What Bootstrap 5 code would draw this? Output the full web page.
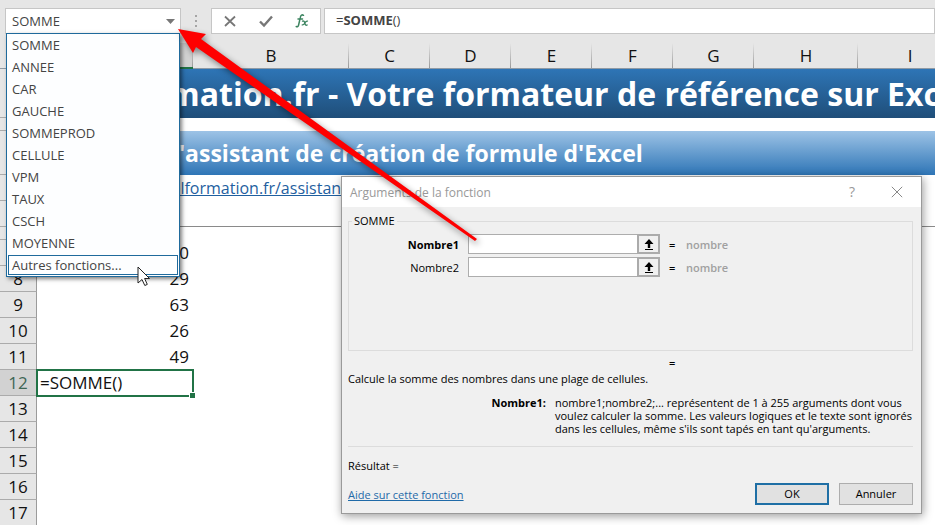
<!DOCTYPE html>
<html lang="fr">
<head>
<meta charset="utf-8">
<meta name="viewport" content="width=device-width, initial-scale=1">
<title>Arguments de la fonction</title>
<link rel="stylesheet" href="https://cdn.jsdelivr.net/npm/bootstrap@5.3.0/dist/css/bootstrap.min.css">
<style>
  :root { --chrome: #e6e6e6; --rule: #c6c6c6; --green: #217346; --menu: #1f6a9c; }
  body { font-family: "Open Sans", "Noto Sans", sans-serif; background: #fff; min-height: 100vh; }
  .sheet-app { min-height: 100vh; }

  /* formula bar */
  .formula-bar { background: var(--chrome); padding: 8px 0 9px 5px; }
  .box { background: #fff; border: 1px solid var(--rule); height: 26px; }
  .name-box { width: 176px; }
  .name-box input, .formula-line { font-size: 13px; line-height: 22px; color: #444; }
  .name-box input { padding: 0 0 0 6px; outline: 0; }
  .bare { border: 0; background: transparent; padding: 0; line-height: 1; color: inherit; }
  .name-box .opener { padding-right: 5px; }
  .grip { width: 30px; }
  .tools { width: 110px; padding: 0 10px; margin-right: 3px; }
  .formula-line { padding-left: 11px; }

  .fn-menu { top: 24px; left: 0; width: 174px; padding: 0 1px 1px; z-index: 5; background: #fdfeff;
    border: 1px solid var(--menu); box-shadow: 2px 2px 4px rgba(0,0,0,.5); }
  .fn-menu button { font-size: 13px; line-height: 20px; height: 22px; padding: 0 3px; color: #444; border: 1px solid transparent; }
  .fn-menu .hot { border-color: var(--menu); height: 20px; line-height: 18px; margin-top: 1px; }

  /* worksheet grid */
  .grid { table-layout: fixed; width: 100%; min-width: 962px; border-collapse: separate; border-spacing: 0; color: #111; font-size: 17px; }
  .grid th, .grid td { padding: 0; height: 26px; line-height: 24px; font-weight: 400; white-space: nowrap; overflow: hidden; }
  .grid thead th { text-align: center; border-bottom: 1px solid #8f9aa5; background: linear-gradient(#e6e6e6, #999) right/1px 100% no-repeat var(--chrome); }
  .grid thead th.on { background-color: #d2d2d2; border-bottom: 2px solid var(--green); color: var(--green); }
  .grid tbody th { text-align: center; background: var(--chrome); border-right: 1px solid #9b9b9b; border-bottom: 1px solid #ababab; }
  .grid tbody th.on { background: #d2d2d2; color: #3f6655; }
  .grid .thin th, .grid .thin td { height: 13px; line-height: 12px; font-size: 10px; }
  .grid .banner td { height: 49px; line-height: 48px; font-size: 32px; font-weight: 700; color: #fff; padding-left: 3px; background: linear-gradient(#2e75b6, #1f4e79); }
  .grid .banner-sub td { height: 44px; line-height: 44px; font-size: 23px; font-weight: 700; color: #fff; padding-left: 129px; background: linear-gradient(#9dc3e6, #2e75b6); }
  .grid .web td { padding-left: 68px; font-size: 16px; }
  .web a { color: #1f5f9f; text-decoration: underline; }
  .grid .ruled td { border-bottom: 1px solid #8a8a8a; }
  .grid td.num { text-align: right; padding-right: 4px; }
  .grid td.active-cell { padding-left: 3px; outline: 2px solid var(--green); outline-offset: -1px; overflow: visible; position: relative; }
  .handle { right: -2px; bottom: -2px; width: 5px; height: 5px; background: var(--green); outline: 1px solid #fff; }
  .col-head { width: 37px; } .col-a { width: 156px; } .col-b { width: 156px; } .col-s { width: 81px; } .col-h { width: 104px; }

  /* dialog */
  .fn-dialog { top: 176px; right: 13px; width: 581px; z-index: 3; font-size: 11px; line-height: 13px; color: #000;
    background: #f0f0f0; border: 1px solid #9a9a9a; box-shadow: 1px 2px 9px rgba(0,0,0,.4); }
  .title-strip { background: #fff; height: 30px; padding: 0 18px 0 8px; color: #999; font-size: 12px; }
  .title-strip .query { margin-right: 36px; font-size: 14px; }
  .dlg-body { padding: 7px 8px 8px 6px; }
  .arg-frame { height: 137px; border: 1px solid #dcdcdc; padding: 0; }
  .arg-frame legend { float: none; width: auto; font-size: 11px; line-height: 14px; padding: 0 2px; margin: 0 0 6px 3px; }
  .arg-row { margin-bottom: 3px; height: 20px; }
  .arg-row label { width: 110px; text-align: right; margin-right: 9px; }
  .arg-row input { width: 170px; height: 20px; border: 1px solid #adadad; background: #fff; padding: 0 3px; outline: 0; }
  .arg-row button { width: 23px; height: 20px; border: 2px solid #ababab; background: #f0f0f0; margin-left: -1px; }
  .arg-eq { width: 26px; padding-left: 9px; font-weight: 600; }
  .hint { color: #a0a0a0; font-weight: 600; }
  .total-eq { padding: 5px 0 3px 321px; font-weight: 600; }
  .arg-help { padding: 11px 0; }
  .arg-help dt { width: 198px; text-align: right; margin-right: 9px; }
  .split { border-top: 1px solid #dcdcdc; padding-top: 12px; }
  .actions { padding-top: 11px; gap: 10px; }
  .fn-dialog a { color: #1f6aa8; }
  .push { width: 74px; height: 22px; padding: 0; border: 1px solid #adadad; background: #e1e1e1; font-size: 11px; line-height: 18px; }
  .push.main { border: 2px solid #1f6fa5; }

  .pointer-arrow { left: 0; top: 0; z-index: 6; pointer-events: none; filter: drop-shadow(2px 3px 3px rgba(0,0,0,.45)); }
  .mouse { left: 131px; top: 257px; z-index: 7; pointer-events: none; }
</style>
<script src="https://cdn.jsdelivr.net/npm/bootstrap@5.3.0/dist/js/bootstrap.bundle.min.js"></script>
</head>
<body>
<div class="sheet-app position-relative overflow-hidden">
  <header class="formula-bar d-flex">
    <div class="name-box box position-relative d-flex align-items-center">
      <input class="bare flex-grow-1 w-100" type="text" value="SOMME" aria-label="Zone Nom">
      <button class="bare opener" type="button" aria-label="Ouvrir la liste">
        <svg class="d-block" width="9" height="5" viewBox="0 0 9 5"><path d="M0 0h9L4.500 5z" fill="#777"/></svg>
      </button>
      <ul class="fn-menu list-unstyled position-absolute mb-0">
        <li><button class="bare d-block w-100 text-start" type="button">SOMME</button></li>
        <li><button class="bare d-block w-100 text-start" type="button">ANNEE</button></li>
        <li><button class="bare d-block w-100 text-start" type="button">CAR</button></li>
        <li><button class="bare d-block w-100 text-start" type="button">GAUCHE</button></li>
        <li><button class="bare d-block w-100 text-start" type="button">SOMMEPROD</button></li>
        <li><button class="bare d-block w-100 text-start" type="button">CELLULE</button></li>
        <li><button class="bare d-block w-100 text-start" type="button">VPM</button></li>
        <li><button class="bare d-block w-100 text-start" type="button">TAUX</button></li>
        <li><button class="bare d-block w-100 text-start" type="button">CSCH</button></li>
        <li><button class="bare d-block w-100 text-start" type="button">MOYENNE</button></li>
        <li><button class="bare d-block w-100 text-start hot" type="button">Autres fonctions...</button></li>
      </ul>
      <svg class="mouse position-absolute" width="14" height="22" viewBox="0 0 14 22"><path d="M1 1v16l4-3.500 2.800 6 2.500-1.100-2.700-5.900H12.500z" fill="#fff" stroke="#222" stroke-width="1"/></svg>
    </div>
    <div class="grip d-flex align-items-center justify-content-center">
      <svg width="2" height="12" viewBox="0 0 2 12" fill="#a5a5a5"><path d="M0 0h2v2H0zM0 5h2v2H0zM0 10h2v2H0z"/></svg>
    </div>
    <div class="tools box d-flex align-items-center justify-content-between">
      <button class="bare" type="button" aria-label="Annuler la saisie"><svg class="d-block" width="16" height="14" viewBox="0 0 16 14"><path d="M3 2.500l10 9.500M13 2.500l-10 9.500" fill="none" stroke="#777" stroke-width="1.800"/></svg></button>
      <button class="bare" type="button" aria-label="Valider la saisie"><svg class="d-block" width="16" height="14" viewBox="0 0 16 14"><path d="M2 7.500l4 4 8-9" fill="none" stroke="#777" stroke-width="2.400"/></svg></button>
      <button class="bare" type="button" aria-label="Insérer une fonction"><svg class="d-block" width="16" height="16" viewBox="0 0 16 16" fill="none" stroke="#3c8460" stroke-linecap="round"><path d="M9.500 2.300C8 1.300 6.800 2.200 6.400 4.200L4.600 12c-.4 1.600-1.300 2-2.400 1.500M4 6h4.500" stroke-width="1.500"/><path d="M8.500 8.200c1.400-.6 1.900.3 2.300 1.800.5 1.800 1 2.700 2.400 2M13.500 8.100c-1.400-.4-2.100.9-2.700 1.900-.7 1.200-1.400 2.300-2.600 1.900" stroke-width="1.300"/></svg></button>
    </div>
    <div class="formula-line box flex-grow-1" role="textbox" aria-label="Barre de formule">=<b>SOMME</b>()</div>
  </header>

  <table class="grid">
    <colgroup><col class="col-head"><col class="col-a"><col class="col-b"><col class="col-s"><col class="col-s"><col class="col-s"><col class="col-s"><col class="col-s"><col class="col-h"><col></colgroup>
    <thead><tr><th></th><th class="on" scope="col">A</th><th scope="col">B</th><th scope="col">C</th><th scope="col">D</th><th scope="col">E</th><th scope="col">F</th><th scope="col">G</th><th scope="col">H</th><th scope="col">I</th></tr></thead>
    <tbody>
      <tr class="banner"><th scope="row">1</th><td colspan="9">Excelformation.fr - Votre formateur de référence sur Excel</td></tr>
      <tr class="thin"><th scope="row">2</th><td colspan="9"></td></tr>
      <tr class="banner-sub"><th scope="row">3</th><td colspan="9">L'assistant de création de formule d'Excel</td></tr>
      <tr class="web"><th scope="row">4</th><td colspan="9"><a href="#">www.excelformation.fr/assistant</a></td></tr>
      <tr class="ruled"><th scope="row">5</th><td colspan="9"></td></tr>
      <tr class="thin"><th scope="row">6</th><td colspan="9"></td></tr>
      <tr><th scope="row">7</th><td class="num">10</td><td colspan="8"></td></tr>
      <tr><th scope="row">8</th><td class="num">29</td><td colspan="8"></td></tr>
      <tr><th scope="row">9</th><td class="num">63</td><td colspan="8"></td></tr>
      <tr><th scope="row">10</th><td class="num">26</td><td colspan="8"></td></tr>
      <tr><th scope="row">11</th><td class="num">49</td><td colspan="8"></td></tr>
      <tr><th class="on" scope="row">12</th><td class="active-cell">=SOMME()<span class="handle position-absolute"></span></td><td colspan="8"></td></tr>
      <tr><th scope="row">13</th><td colspan="9"></td></tr>
      <tr><th scope="row">14</th><td colspan="9"></td></tr>
      <tr><th scope="row">15</th><td colspan="9"></td></tr>
      <tr><th scope="row">16</th><td colspan="9"></td></tr>
      <tr><th scope="row">17</th><td colspan="9"></td></tr>
    </tbody>
  </table>

  <section class="fn-dialog position-absolute" role="dialog" aria-labelledby="dlg-title">
    <div class="title-strip d-flex align-items-center">
      <span id="dlg-title" class="me-auto">Arguments de la fonction</span>
      <button class="bare query" type="button">?</button>
      <button class="bare" type="button" aria-label="Fermer"><svg class="d-block" width="12" height="12" viewBox="0 0 12 12"><path d="M.8.800l10.400 10.400M11.200.800L.8 11.200" stroke="#888" stroke-width="1"/></svg></button>
    </div>
    <div class="dlg-body">
      <fieldset class="arg-frame">
        <legend>SOMME</legend>
        <div class="arg-row d-flex align-items-center">
          <label class="fw-bold" for="n1">Nombre1</label><input id="n1" type="text">
          <button class="d-flex align-items-center justify-content-center p-0" type="button" aria-label="Choisir la plage 1"><svg width="10" height="11" viewBox="0 0 10 11"><path d="M5 0l4.500 5H6.200v4H3.800V5H.5zM1 10h8v1H1z"/></svg></button>
          <span class="arg-eq">=</span><span class="hint">nombre</span>
        </div>
        <div class="arg-row d-flex align-items-center">
          <label for="n2">Nombre2</label><input id="n2" type="text">
          <button class="d-flex align-items-center justify-content-center p-0" type="button" aria-label="Choisir la plage 2"><svg width="10" height="11" viewBox="0 0 10 11"><path d="M5 0l4.500 5H6.200v4H3.800V5H.5zM1 10h8v1H1z"/></svg></button>
          <span class="arg-eq">=</span><span class="hint">nombre</span>
        </div>
      </fieldset>
      <div class="total-eq">=</div>
      <div>Calcule la somme des nombres dans une plage de cellules.</div>
      <dl class="arg-help d-flex mb-0">
        <dt>Nombre1:</dt>
        <dd class="mb-0 text-nowrap">nombre1;nombre2;... représentent de 1 à 255 arguments dont vous<br>voulez calculer la somme. Les valeurs logiques et le texte sont ignorés<br>dans les cellules, même s'ils sont tapés en tant qu'arguments.</dd>
      </dl>
      <div class="split">Résultat =</div>
      <div class="actions d-flex align-items-center">
        <a class="me-auto" href="#">Aide sur cette fonction</a>
        <button class="push main" type="button">OK</button>
        <button class="push" type="button">Annuler</button>
      </div>
    </div>
  </section>

  <svg class="pointer-arrow position-absolute" width="500" height="260" viewBox="0 0 500 260"><path d="M178 29L206 34L201 39L477 239L475 241L196 47L193 53z" fill="#fe0000"/></svg>
</div>
</body>
</html>
